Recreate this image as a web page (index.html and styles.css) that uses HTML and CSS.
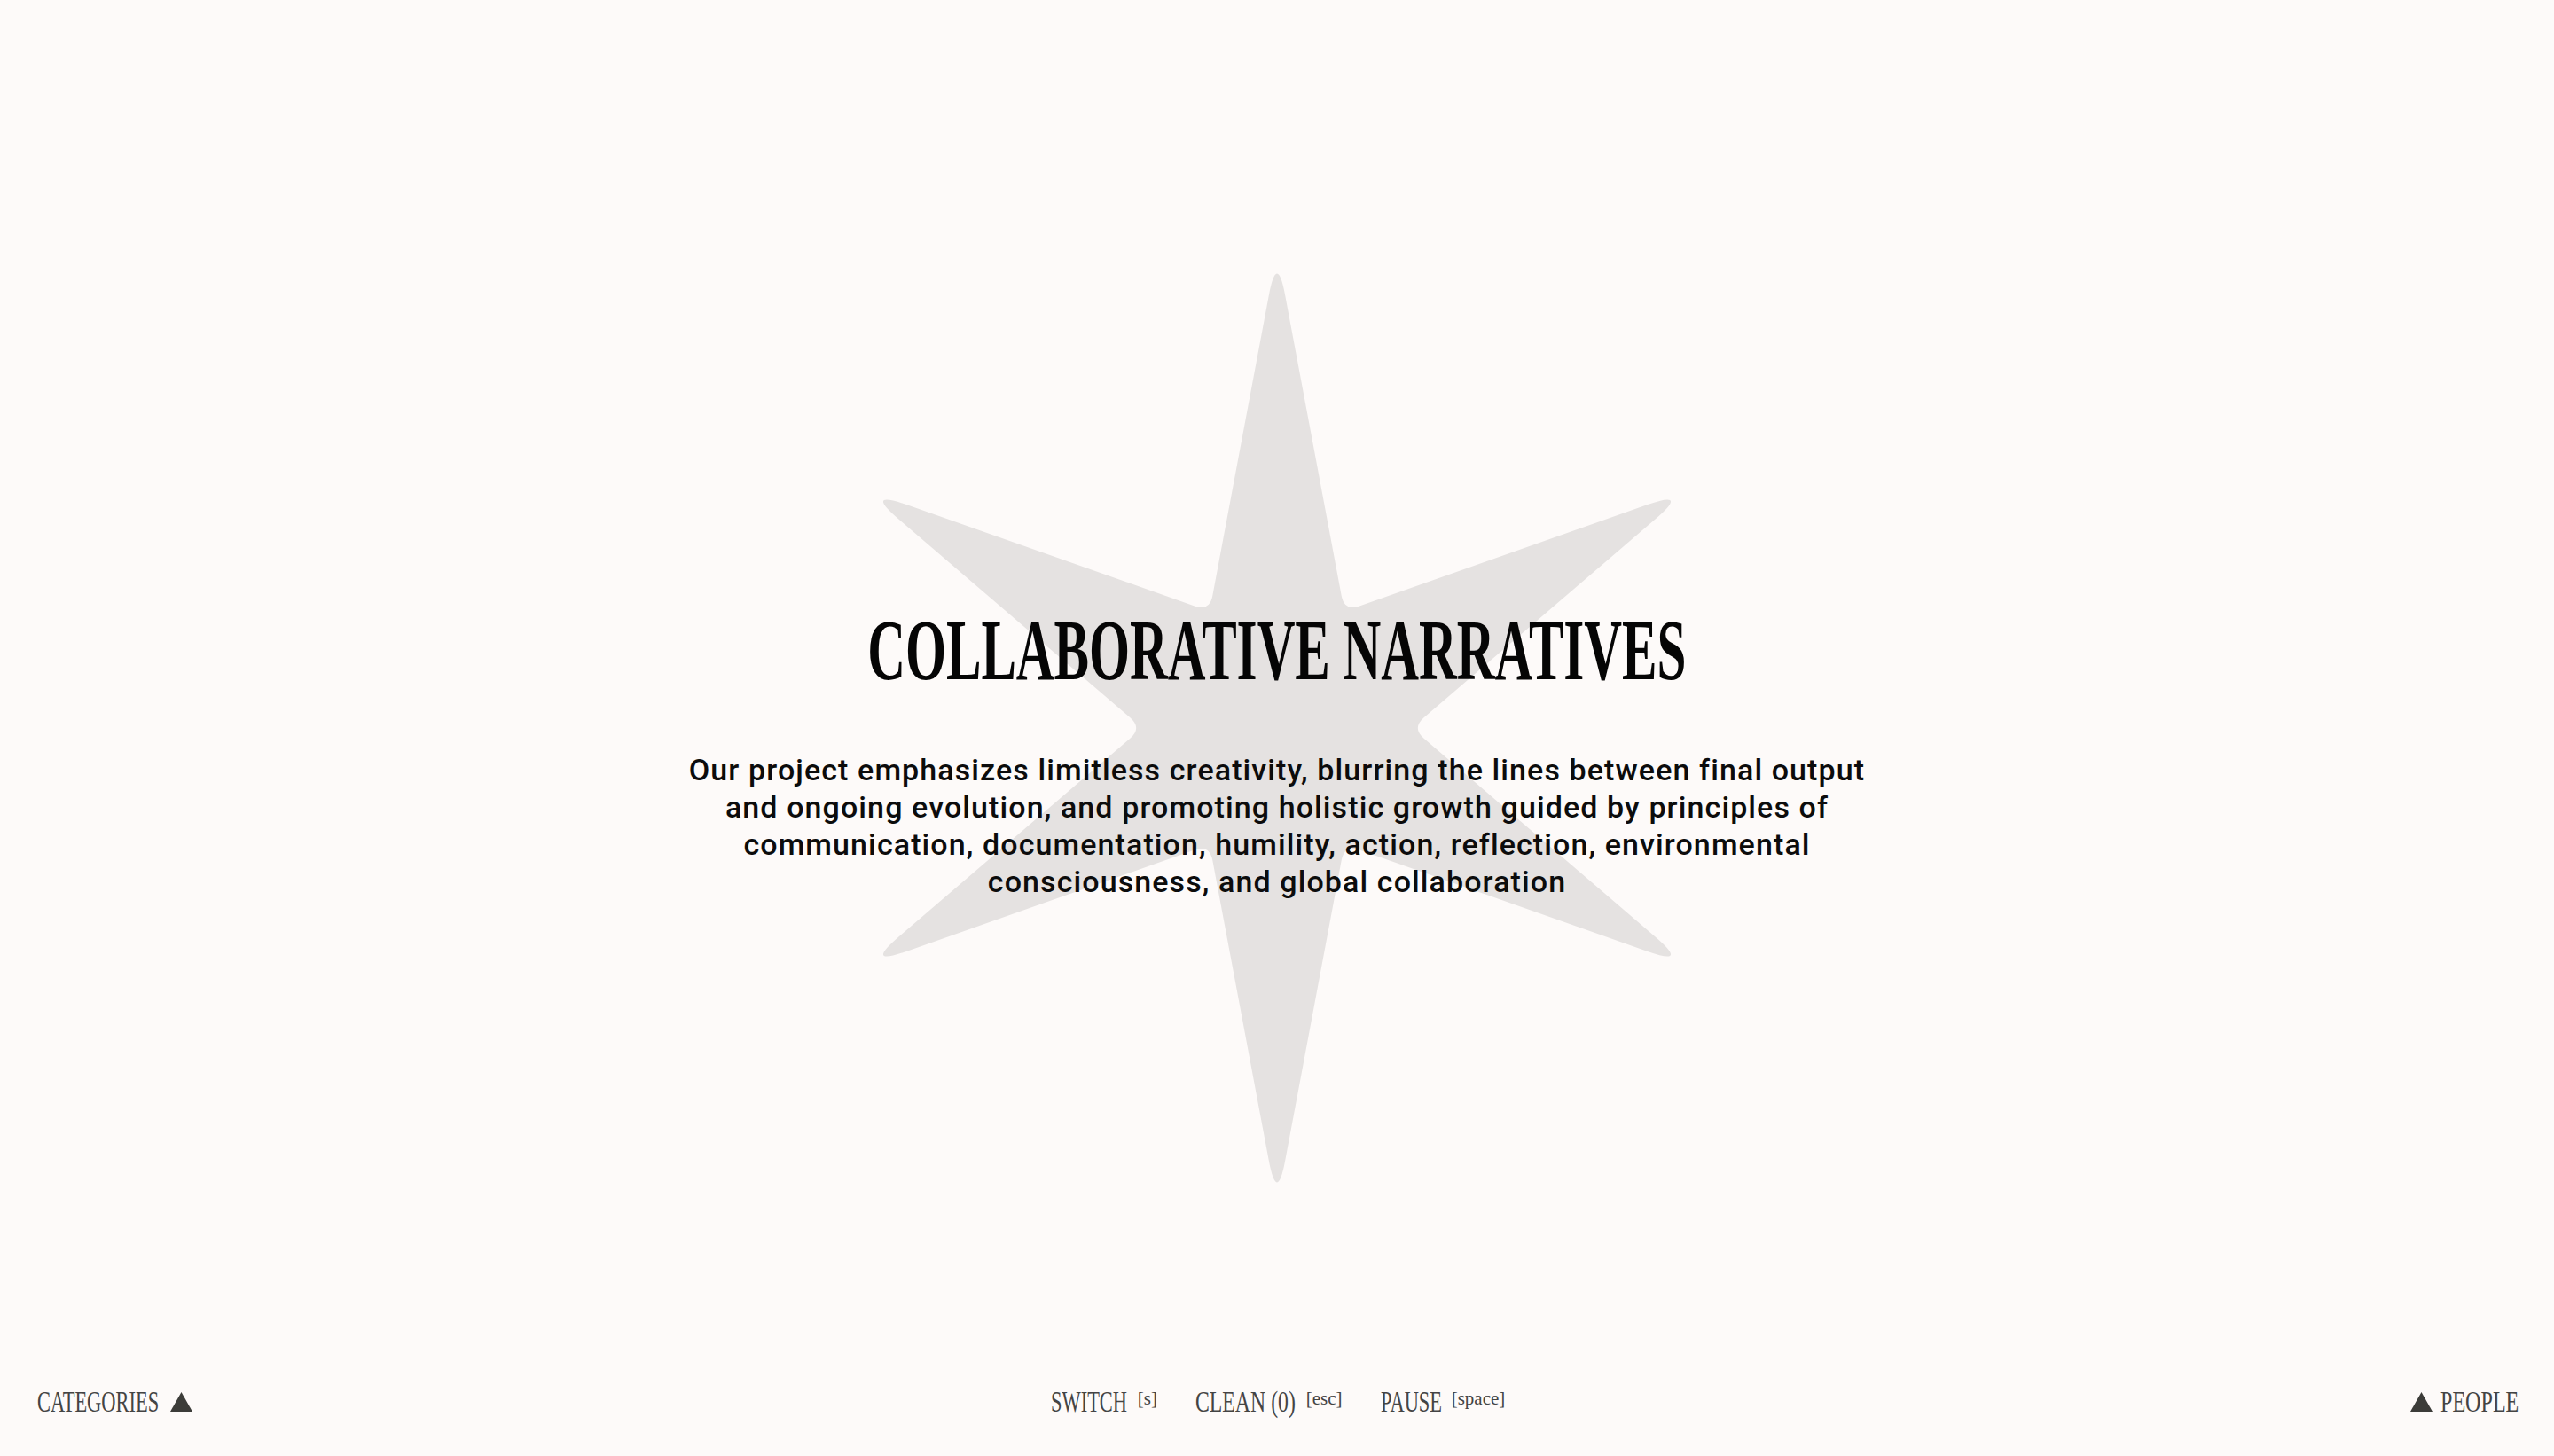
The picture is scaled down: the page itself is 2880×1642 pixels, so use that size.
FILE: index.html
```html
<!DOCTYPE html>
<html lang="en">
<head>
<meta charset="utf-8">
<title>Collaborative Narratives</title>
<link rel="stylesheet" href="styles.css">
</head>
<body>
<div class="page">
  <svg class="star" width="1120" height="1120" viewBox="-560 -560 1120 1120" aria-hidden="true">
    <path d="M9.21,-487.86 L72.68,-149.29 Q76,-131.6 92.98,-137.57 L417.94,-251.91 Q465.1,-268.5 427.15,-235.95 L165.66,-11.72 Q152,0 165.66,11.72 L427.15,235.95 Q465.1,268.5 417.94,251.91 L92.98,137.57 Q76,131.6 72.68,149.29 L9.21,487.86 Q0,537 -9.21,487.86 L-72.68,149.29 Q-76,131.6 -92.98,137.57 L-417.94,251.91 Q-465.1,268.5 -427.15,235.95 L-165.66,11.72 Q-152,0 -165.66,-11.72 L-427.15,-235.95 Q-465.1,-268.5 -417.94,-251.91 L-92.98,-137.57 Q-76,-131.6 -72.68,-149.29 L-9.21,-487.86 Q0,-537 9.21,-487.86 Z"/>
  </svg>
  <main class="hero">
    <h1 class="title"><span class="title-text">COLLABORATIVE NARRATIVES</span></h1>
    <p class="intro">Our project emphasizes limitless creativity, blurring the lines between final output and ongoing evolution, and promoting holistic growth guided by principles of communication, documentation, humility, action, reflection, environmental consciousness, and global collaboration</p>
  </main>
  <footer class="bar">
    <div class="bar-left">
      <span class="lbl lbl-categories">CATEGORIES</span><svg class="tri tri-after" width="25" height="22" viewBox="0 0 25 22"><polygon points="0,22 12.5,0 25,22"/></svg>
    </div>
    <div class="bar-center">
      <span class="item"><span class="lbl lbl-switch">SWITCH</span><span class="key">[s]</span></span>
      <span class="item"><span class="lbl lbl-clean">CLEAN (0)</span><span class="key">[esc]</span></span>
      <span class="item"><span class="lbl lbl-pause">PAUSE</span><span class="key">[space]</span></span>
    </div>
    <div class="bar-right">
      <svg class="tri tri-before" width="25" height="22" viewBox="0 0 25 22"><polygon points="0,22 12.5,0 25,22"/></svg><span class="lbl lbl-people">PEOPLE</span>
    </div>
  </footer>
</div>
</body>
</html>
```
FILE: styles.css
```css
* {
  box-sizing: border-box;
}

html,
body {
  margin: 0;
  padding: 0;
  background: #fdfaf9;
}

.page {
  position: relative;
  min-height: 100vh;
  display: flex;
  flex-direction: column;
  overflow: hidden;
}

.star {
  position: absolute;
  left: 50%;
  top: 821px;
  transform: translate(-50%, -50%);
  fill: #e5e2e1;
  z-index: 0;
}

.hero {
  position: relative;
  z-index: 1;
  flex: 1;
  display: flex;
  flex-direction: column;
  align-items: center;
  padding-top: 685px;
}

.title {
  margin: 0;
  font-family: "Liberation Serif", "Times New Roman", serif;
  font-weight: 700;
  font-size: 97px;
  line-height: 97px;
  color: #050505;
  text-align: center;
  white-space: nowrap;
}

.title-text {
  display: inline-block;
  transform: scaleX(0.61);
  transform-origin: center;
}

.intro {
  margin: 65px 0 0;
  width: 1350px;
  font-family: Roboto, "Liberation Sans", sans-serif;
  font-weight: 500;
  font-size: 34px;
  line-height: 42px;
  letter-spacing: 1.1px;
  color: #0c0c0c;
  text-align: center;
}

.bar {
  position: relative;
  z-index: 1;
  display: grid;
  grid-template-columns: 1fr auto 1fr;
  align-items: end;
  padding: 0 40px 44px 42px;
  font-family: "Liberation Serif", "Times New Roman", serif;
  font-size: 33px;
  line-height: 33px;
  color: #444;
  white-space: nowrap;
}

.bar-left,
.bar-center,
.bar-right {
  display: flex;
  align-items: baseline;
}

.bar-right {
  justify-self: end;
}

/* condensed label: glyphs squeezed horizontally, layout width trimmed to match */
.lbl {
  display: inline-block;
  transform: scaleX(0.68);
  transform-origin: left center;
}

.lbl-categories { margin-right: -65.7px; }
.lbl-switch { margin-right: -40.5px; }
.lbl-clean { transform: scaleX(0.72); margin-right: -43.9px; }
.lbl-pause { margin-right: -33.4px; }
.lbl-people { transform: scaleX(0.73); margin-right: -32.7px; }

.tri {
  fill: #3c3c39;
  align-self: baseline;
}

.tri-after {
  margin-left: 14px;
}

.tri-before {
  margin-right: 9px;
}

.item {
  display: flex;
  align-items: baseline;
}

.item + .item {
  margin-left: 43px;
}

.key {
  margin-left: 12px;
  font-size: 21px;
  line-height: 21px;
  position: relative;
  top: -8px;
}
```
